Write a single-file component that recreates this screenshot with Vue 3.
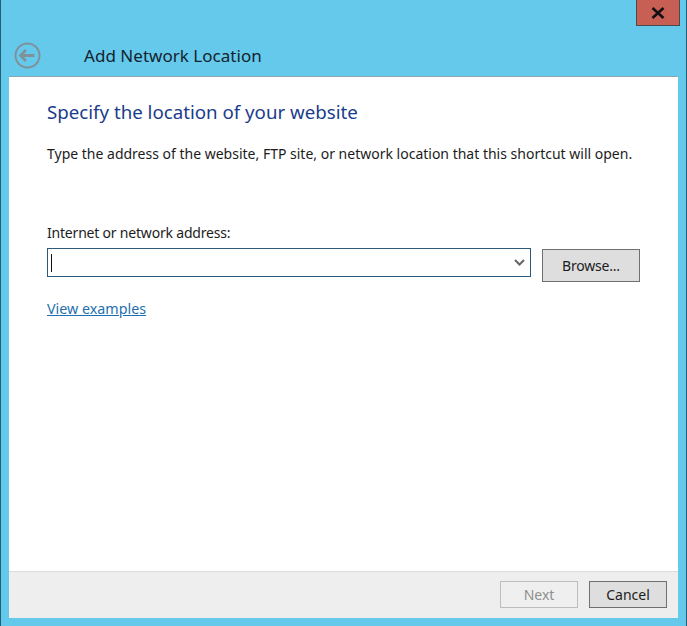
<template>
  <div class="window">
    <div class="topbar">
      <div class="close-row">
        <button class="close" type="button" aria-label="Close">
          <svg width="14" height="12" viewBox="0 0 14 12"><path d="M1.5 1 L12.5 11 M12.5 1 L1.5 11" stroke="#111" stroke-width="2.6" fill="none"/></svg>
        </button>
      </div>
      <div class="title-row">
        <svg class="back" width="27" height="27" viewBox="0 0 27 27">
          <circle cx="13.5" cy="13.5" r="12" fill="none" stroke="#7f929c" stroke-width="2"/>
          <path d="M6.5 13.5 H20.5 M12 8 L6.5 13.5 L12 19" fill="none" stroke="#7f929c" stroke-width="2.8"/>
        </svg>
        <span class="title">Add Network Location</span>
      </div>
    </div>
    <div class="panel">
      <div class="content">
        <h1 class="heading">Specify the location of your website</h1>
        <p class="desc">Type the address of the website, FTP site, or network location that this shortcut will open.</p>
        <label class="label">Internet or network address:</label>
        <div class="field-row">
          <div class="combo">
            <span class="caret"></span>
            <svg class="chev" width="11" height="7" viewBox="0 0 11 7"><path d="M1 1 L5.5 5.5 L10 1" fill="none" stroke="#666" stroke-width="2"/></svg>
          </div>
          <button class="btn browse" type="button">Browse...</button>
        </div>
        <a class="link" href="#">View examples</a>
      </div>
      <div class="footer">
        <button class="btn next" type="button" disabled>Next</button>
        <button class="btn cancel" type="button">Cancel</button>
      </div>
    </div>
  </div>
</template>

<script setup>
</script>

<style>
html, body { margin: 0; padding: 0; }
</style>

<style scoped>
.window {
  width: 687px;
  height: 626px;
  box-sizing: border-box;
  background: #65c9ec;
  border-left: 1px solid #1f5f7c;
  border-right: 1px solid #1f5f7c;
  display: flex;
  flex-direction: column;
  font-family: "Noto Sans", "Open Sans", sans-serif;
  font-size: 14px;
  color: #1c1c1c;
  overflow: hidden;
}
.topbar {
  height: 76px;
  flex: none;
  display: flex;
  flex-direction: column;
}
.close-row {
  display: flex;
  justify-content: flex-end;
  height: 26px;
  padding-right: 6px;
}
.close {
  width: 44px;
  height: 26px;
  box-sizing: border-box;
  padding: 0;
  background: #c75f55;
  border: 1px solid #4d4a4a;
  border-top: none;
  display: flex;
  align-items: center;
  justify-content: center;
}
.title-row {
  display: flex;
  align-items: center;
  padding-left: 13px;
  margin-top: 16px;
  height: 27px;
}
.back { flex: none; }
.title {
  margin-left: 43px;
  font-size: 17px;
  letter-spacing: 0.03px;
  color: #13232c;
}
.panel {
  margin: 0 8px 8px 8px;
  flex: 1;
  background: #fff;
  border-top: 1px solid #8aa4b2;
  display: flex;
  flex-direction: column;
  min-height: 0;
}
.content {
  flex: 1;
  padding: 22px 38px 0 38px;
}
.heading {
  margin: 0;
  font-weight: 400;
  font-size: 18.7px;
  line-height: 26px;
  color: #1b3c8c;
}
.desc {
  margin: 19px 0 0;
  line-height: 20px;
  white-space: nowrap;
}
.label {
  display: block;
  margin-top: 59px;
  line-height: 20px;
  letter-spacing: -0.2px;
}
.field-row {
  display: flex;
  align-items: flex-start;
  margin-top: 5px;
}
.combo {
  width: 484px;
  height: 29px;
  box-sizing: border-box;
  border: 1px solid #2d5a78;
  display: flex;
  align-items: center;
  justify-content: space-between;
  padding: 0 5px 0 3px;
}
.caret {
  width: 1px;
  height: 18px;
  background: #111;
}
.btn {
  box-sizing: border-box;
  width: 98px;
  height: 33px;
  padding: 0;
  margin: 0;
  font: inherit;
  color: #1c1c1c;
  background: #dedede;
  border: 1px solid #707070;
}
.browse { margin-left: 11px; margin-top: 1px; letter-spacing: -0.2px; }
.link {
  display: inline-block;
  margin-top: 17px;
  font-size: 14.3px;
  line-height: 20px;
  color: #1f6fb0;
  text-decoration: underline;
}
.footer {
  height: 47px;
  flex: none;
  box-sizing: border-box;
  background: #eeeeee;
  border-top: 1px solid #dcdcdc;
  display: flex;
  justify-content: flex-end;
  align-items: flex-start;
  gap: 11px;
  padding: 9px 11px 0 0;
}
.footer .btn { width: 78px; height: 27px; }
.next {
  background: #efefef;
  border-color: #bdbdbd;
  color: #8f8f8f;
}
</style>
